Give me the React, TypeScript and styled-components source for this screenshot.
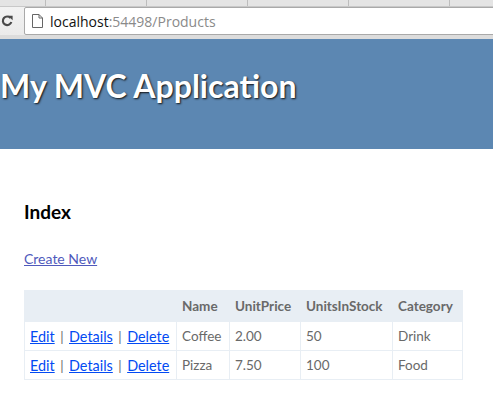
import React from "react";
import styled, { createGlobalStyle } from "styled-components";

const Global = createGlobalStyle`
  html, body { margin: 0; padding: 0; background: #fff; }
  body { font-family: "Lato", "Open Sans", sans-serif; color: #696969; overflow: hidden; }
`;

const Page = styled.div`
  width: 493px;
  height: 413px;
  display: flex;
  flex-direction: column;
  overflow: hidden;
`;

const Chrome = styled.div`
  height: 39px;
  box-sizing: border-box;
  background: linear-gradient(#f4f4f4, #ebebeb);
  border-bottom: 4px solid #dcdcdc;
  display: flex;
  flex-direction: column;
`;

const TabStrip = styled.div`
  height: 6px;
  display: flex;
  border-bottom: 1px solid #c8c8c8;
  background: #e4e4e4;
`;

const TabEdge = styled.div<{ $w: number }>`
  width: ${(p) => p.$w}px;
  border-right: 1px solid #bdbdbd;
`;

const Toolbar = styled.div`
  flex: 1;
  display: flex;
  align-items: center;
  gap: 11px;
  padding-left: 1px;
`;

const Reload = styled.svg`
  width: 12px;
  height: 12px;
  flex: none;
`;

const Omnibox = styled.div`
  flex: 1;
  height: 26px;
  margin-right: -4px;
  background: #fff;
  border: 1px solid #a9a9a9;
  border-radius: 2px;
  display: flex;
  align-items: center;
  gap: 7px;
  padding-left: 7px;
  font-family: "Open Sans", "Liberation Sans", sans-serif;
  font-size: 14px;
`;

const Host = styled.span`
  color: #111;
`;

const Rest = styled.span`
  color: #8a8a8a;
`;

const Header = styled.header`
  height: 110px;
  background: #5c87b2;
  display: flex;
  align-items: center;
  padding-bottom: 17px;
  box-sizing: border-box;
`;

const Title = styled.h1`
  margin: 0;
  font-family: "Lato", sans-serif;
  font-weight: bold;
  font-size: 32px;
  color: #fff;
  text-shadow: 1px 1px 2px #111;
  white-space: nowrap;
`;

const Main = styled.main`
  padding: 51px 24px 0 24px;
`;

const Heading = styled.h2`
  margin: 0 0 24px 0;
  font-size: 19px;
  font-weight: bold;
  color: #000;
  line-height: 24px;
`;

const CreateLink = styled.a`
  display: inline-block;
  font-size: 14px;
  color: #505abc;
  text-decoration: underline;
  margin-bottom: 23px;
`;

const Table = styled.table`
  border-collapse: collapse;
  border: 1px solid #e8eef4;
  font-size: 13.5px;
`;

const Th = styled.th<{ $w: number }>`
  width: ${(p) => p.$w}px;
  box-sizing: border-box;
  height: 31px;
  padding: 6px 5px;
  text-align: left;
  background: #e8eef4;
  border: 1px solid #e8eef4;
  font-weight: bold;
  color: #696969;
`;

const Td = styled.td`
  height: 29px;
  box-sizing: border-box;
  padding: 5px;
  border: 1px solid #e8eef4;
  color: #696969;
  white-space: nowrap;
`;

const ActionLink = styled.a`
  color: #034af3;
  font-size: 14.4px;
  text-decoration: underline;
`;

const Sep = styled.span`
  color: #696969;
  margin: 0 2px;
`;

const products = [
  { name: "Coffee", price: "2.00", stock: "50", category: "Drink" },
  { name: "Pizza", price: "7.50", stock: "100", category: "Food" },
];

export default function App() {
  return (
    <Page>
      <Global />
      <Chrome>
        <TabStrip>
          <TabEdge $w={45} />
          <TabEdge $w={100} />
          <TabEdge $w={100} />
          <TabEdge $w={100} />
          <TabEdge $w={100} />
        </TabStrip>
        <Toolbar>
          <Reload viewBox="0 0 12 12">
            <path d="M9.6 3.2 A4.3 4.3 0 1 0 10.3 7" fill="none" stroke="#4a4a4a" strokeWidth="2.2" />
            <path d="M7 0.8 L11.6 0.8 L11.6 5.2 Z" fill="#4a4a4a" />
          </Reload>
          <Omnibox>
            <svg width="11" height="14" viewBox="0 0 11 14">
              <path d="M0.5 0.5 H7 L10.5 4 V13.5 H0.5 Z M7 0.5 V4 H10.5" fill="#fff" stroke="#666" strokeWidth="1" />
            </svg>
            <span>
              <Host>localhost</Host>
              <Rest>:54498/Products</Rest>
            </span>
          </Omnibox>
        </Toolbar>
      </Chrome>
      <Header>
        <Title>My MVC Application</Title>
      </Header>
      <Main>
        <Heading>Index</Heading>
        <CreateLink href="#">Create New</CreateLink>
        <Table>
          <thead>
            <tr>
              <Th $w={152}></Th>
              <Th $w={53}>Name</Th>
              <Th $w={71}>UnitPrice</Th>
              <Th $w={92}>UnitsInStock</Th>
              <Th $w={70}>Category</Th>
            </tr>
          </thead>
          <tbody>
            {products.map((p) => (
              <tr key={p.name}>
                <Td>
                  <ActionLink href="#">Edit</ActionLink> <Sep>|</Sep>{" "}
                  <ActionLink href="#">Details</ActionLink> <Sep>|</Sep>{" "}
                  <ActionLink href="#">Delete</ActionLink>
                </Td>
                <Td>{p.name}</Td>
                <Td>{p.price}</Td>
                <Td>{p.stock}</Td>
                <Td>{p.category}</Td>
              </tr>
            ))}
          </tbody>
        </Table>
      </Main>
    </Page>
  );
}
